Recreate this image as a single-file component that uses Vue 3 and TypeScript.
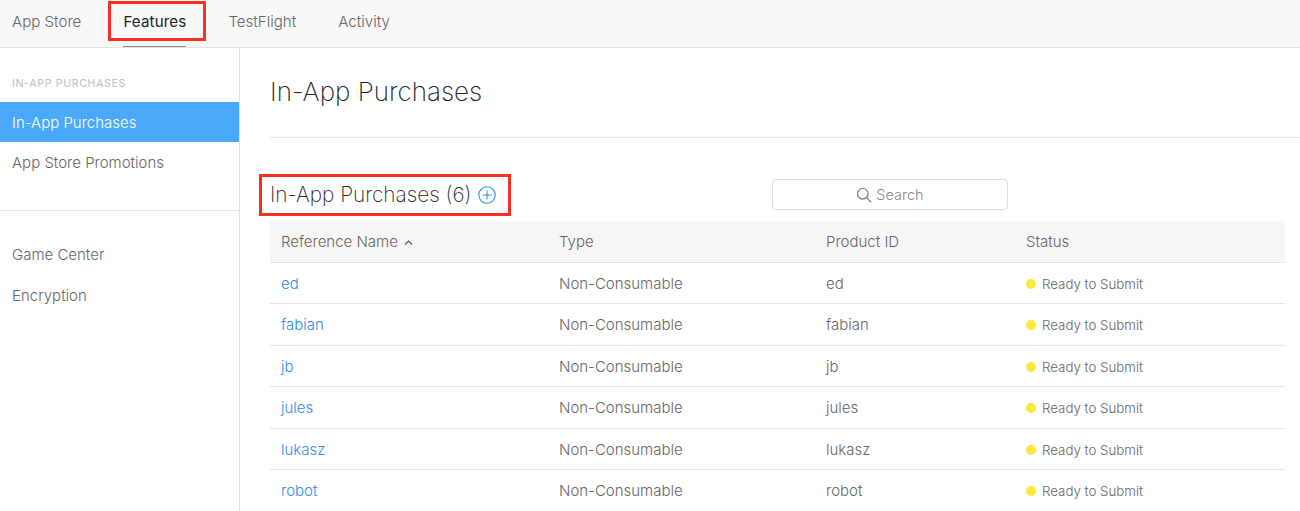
<script setup lang="ts">
const tabs = ['App Store', 'Features', 'TestFlight', 'Activity']
const rows = ['ed', 'fabian', 'jb', 'jules', 'lukasz', 'robot']
</script>

<template>
  <div class="page">
    <header class="topbar">
      <a v-for="t in tabs" :key="t" class="tab" :class="{ active: t === 'Features' }">{{ t }}</a>
      <div class="mark mark-tab"></div>
    </header>
    <div class="body">
      <aside class="side">
        <div class="side-title">IN-APP PURCHASES</div>
        <div class="side-item selected">In-App Purchases</div>
        <div class="side-item">App Store Promotions</div>
        <div class="side-rule"></div>
        <div class="side-item lower">Game Center</div>
        <div class="side-item lower">Encryption</div>
      </aside>
      <main class="main">
        <h1 class="title">In-App Purchases</h1>
        <div class="rule"></div>
        <section class="section">
          <div class="section-head">
            <h2 class="h2">In-App Purchases (6)</h2>
            <svg class="plus" width="18" height="18" viewBox="0 0 18 18" fill="none" stroke="#2f8cf0" stroke-width="1.1">
              <circle cx="9" cy="9" r="8.2" />
              <path d="M9 4.5v9M4.5 9h9" />
            </svg>
            <div class="search">
              <svg width="16" height="16" viewBox="0 0 16 16" fill="none" stroke="#777" stroke-width="1.2">
                <circle cx="6.8" cy="6.8" r="5.3" />
                <path d="M10.6 10.6l4.4 4.6" />
              </svg>
              <span>Search</span>
            </div>
            <div class="mark mark-head"></div>
          </div>
          <table class="table">
            <thead>
              <tr>
                <th class="c1">Reference Name <svg class="caret" width="9" height="5" viewBox="0 0 9 5" fill="none" stroke="#555" stroke-width="1.1"><path d="M1 4.5l3.5-3.5 3.5 3.5" /></svg></th>
                <th class="c2">Type</th>
                <th class="c3">Product ID</th>
                <th class="c4">Status</th>
              </tr>
            </thead>
            <tbody>
              <tr v-for="r in rows" :key="r">
                <td><a class="link">{{ r }}</a></td>
                <td>Non-Consumable</td>
                <td>{{ r }}</td>
                <td><span class="status"><i class="dot"></i>Ready to Submit</span></td>
              </tr>
            </tbody>
          </table>
        </section>
      </main>
    </div>
  </div>
</template>

<style>
html, body { margin: 0; background: #fff; overflow: hidden; }
</style>

<style scoped>
.page {
  position: relative;
  width: 1300px;
  height: 511px;
  overflow: hidden;
  font-family: Inter, "Liberation Sans", sans-serif;
  font-weight: 300;
  color: #333;
}
.topbar {
  display: flex;
  height: 47px;
  padding-left: 12px;
  gap: 42px;
  background: #f8f8f8;
  border-bottom: 1px solid #e3e3e3;
  font-size: 15.1px;
  line-height: 43px;
}
.tab { color: #666; position: relative; }
.tab.active { color: #222; font-weight: 400; letter-spacing: 0.15px; }
.tab.active::after {
  content: '';
  position: absolute;
  left: 0;
  right: 0;
  top: 46px;
  height: 1px;
  background: #8a8a8a;
}
.mark { position: absolute; border: 3px solid #f5301f; box-sizing: border-box; pointer-events: none; }
.mark-tab { left: 108px; top: 1px; width: 98px; height: 40px; }
.body { display: flex; height: 463px; }
.side { width: 239px; flex: none; border-right: 1px solid #e3e3e3; font-size: 15px; }
.side-title {
  padding: 29px 0 0 12px;
  height: 25px;
  font-size: 10.7px;
  line-height: 14px;
  letter-spacing: 0.6px;
  font-weight: 400;
  color: #bdbdbd;
}
.side-item { height: 40px; line-height: 41px; padding-left: 12px; color: #666; }
.side-item.selected { background: #4aa8fd; color: #fff; }
.side-item.lower { height: 40.5px; line-height: 40px; }
.side-rule { height: 1px; margin: 28px 0 24px; background: #e3e3e3; }
.main { flex: 1; padding-left: 30px; min-width: 0; }
.title { margin: 0; padding-top: 26px; height: 63px; font-size: 26px; line-height: 36px; font-weight: 200; color: #222; }
.rule { height: 1px; background: #e3e3e3; }
.section { padding-top: 41px; width: 1015px; }
.section-head { position: relative; display: flex; align-items: center; height: 32px; }
.h2 { margin: 0; font-size: 20.8px; font-weight: 200; color: #222; line-height: 32px; }
.plus { margin-left: 7px; }
.search {
  position: absolute;
  left: 502px;
  top: 0;
  width: 236px;
  height: 31px;
  box-sizing: border-box;
  display: flex;
  align-items: center;
  justify-content: center;
  gap: 4px;
  border: 1px solid #ddd;
  border-radius: 4px;
  font-size: 14.5px;
  color: #888;
}
.mark-head { left: -11px; top: -5px; width: 252px; height: 42px; }
.table { width: 1015px; margin-top: 10px; border-collapse: collapse; table-layout: fixed; font-size: 15px; }
.table th {
  box-sizing: border-box;
  height: 41px;
  padding: 0 0 0 11px;
  background: #f6f6f6;
  border-bottom: 1px solid #e3e3e3;
  text-align: left;
  font-weight: 300;
  color: #666;
}
.table td {
  box-sizing: border-box;
  height: 41.5px;
  padding: 1px 0 0 11px;
  border-bottom: 1px solid #e3e3e3;
  color: #666;
}
.c1 { width: 278px; }
.c2 { width: 267px; }
.c3 { width: 200px; }
.c4 { width: 270px; }
.caret { margin: 0 0 2px 2px; }
.link { color: #2f8cf0; }
.status { display: inline-flex; align-items: center; font-size: 13.3px; color: #666; padding-top: 1px; }
.dot { width: 10px; height: 10px; border-radius: 50%; background: #fbe83a; margin-right: 6px; }
</style>
